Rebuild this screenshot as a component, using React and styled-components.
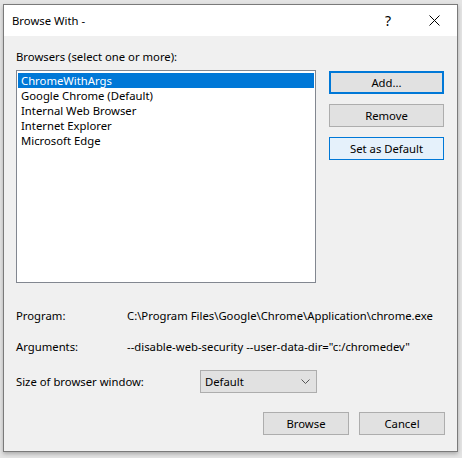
import React from 'react';
import styled, { createGlobalStyle } from 'styled-components';

const GlobalStyle = createGlobalStyle`
  html, body {
    margin: 0;
    padding: 0;
    background: #e4e4e4;
  }
  body {
    font-family: "Noto Sans", "Open Sans", sans-serif;
    font-size: 11.3px;
    color: #000;
  }
`;

const Page = styled.div`
  width: 462px;
  height: 458px;
  padding: 4px 4px 6px 3px;
  box-sizing: border-box;
`;

const Dialog = styled.div`
  width: 455px;
  height: 448px;
  box-sizing: border-box;
  border: 1px solid #7a7a7a;
  background: #f0f0f0;
  display: flex;
  flex-direction: column;
  box-shadow: 0 2px 4px rgba(0, 0, 0, 0.25);
`;

const TitleBar = styled.div`
  height: 31px;
  background: #fff;
  display: flex;
  align-items: center;
  padding-left: 8px;
`;

const Title = styled.div`
  flex: 1;
`;

const TitleButton = styled.div`
  width: 46px;
  height: 31px;
  display: flex;
  align-items: center;
  justify-content: center;
  font-size: 14px;
`;

const Body = styled.div`
  flex: 1;
  padding: 12px 12px 0 12px;
  display: flex;
  flex-direction: column;
`;

const Label = styled.div`
  height: 17px;
  line-height: 17px;
  margin-bottom: 5px;
`;

const MainRow = styled.div`
  display: flex;
  gap: 13px;
`;

const ListBox = styled.div`
  width: 300px;
  height: 213px;
  box-sizing: border-box;
  border: 1px solid #828790;
  background: #fff;
  padding: 2px 1px;
`;

const ListItem = styled.div`
  height: 15px;
  line-height: 15px;
  padding-left: 3px;
  background: ${(p) => (p.$selected ? '#0078d7' : 'transparent')};
  color: ${(p) => (p.$selected ? '#fff' : '#000')};
  white-space: nowrap;
`;

const ButtonColumn = styled.div`
  display: flex;
  flex-direction: column;
  gap: 10px;
  padding-top: 1px;
`;

const Button = styled.div`
  width: ${(p) => p.$width || 115}px;
  height: 23px;
  box-sizing: border-box;
  display: flex;
  align-items: center;
  justify-content: center;
  background: ${(p) => (p.$hover ? '#e5f1fb' : '#e1e1e1')};
  border: ${(p) => (p.$default ? '2px solid #0078d7' : p.$hover ? '1px solid #0078d7' : '1px solid #adadad')};
`;

const InfoRow = styled.div`
  display: flex;
  align-items: center;
  height: 17px;
  margin-top: ${(p) => p.$top}px;
`;

const InfoLabel = styled.div`
  width: ${(p) => p.$width}px;
  flex-shrink: 0;
`;

const InfoValue = styled.div`
  white-space: nowrap;
`;

const SizeRow = styled.div`
  display: flex;
  align-items: center;
  margin-top: 15px;
`;

const Select = styled.div`
  width: 117px;
  height: 23px;
  box-sizing: border-box;
  border: 1px solid #adadad;
  background: #e1e1e1;
  display: flex;
  align-items: center;
  justify-content: space-between;
  padding: 0 6px 0 4px;
`;

const Footer = styled.div`
  display: flex;
  justify-content: flex-end;
  gap: 10px;
  margin-top: 19px;
`;

const browsers = [
  'ChromeWithArgs',
  'Google Chrome (Default)',
  'Internal Web Browser',
  'Internet Explorer',
  'Microsoft Edge',
];

export default function App() {
  return (
    <>
      <GlobalStyle />
      <Page>
        <Dialog>
          <TitleBar>
            <Title>Browse With -</Title>
            <TitleButton>?</TitleButton>
            <TitleButton>
              <svg width="11" height="11" viewBox="0 0 11 11">
                <path d="M0.5 0.5 L10.5 10.5 M10.5 0.5 L0.5 10.5" stroke="#000" strokeWidth="1" />
              </svg>
            </TitleButton>
          </TitleBar>
          <Body>
            <Label>Browsers (select one or more):</Label>
            <MainRow>
              <ListBox>
                {browsers.map((b, i) => (
                  <ListItem key={b} $selected={i === 0}>
                    {b}
                  </ListItem>
                ))}
              </ListBox>
              <ButtonColumn>
                <Button $default>Add...</Button>
                <Button>Remove</Button>
                <Button $hover>Set as Default</Button>
              </ButtonColumn>
            </MainRow>
            <InfoRow $top={24}>
              <InfoLabel $width={111}>Program:</InfoLabel>
              <InfoValue>C:\Program Files\Google\Chrome\Application\chrome.exe</InfoValue>
            </InfoRow>
            <InfoRow $top={14}>
              <InfoLabel $width={111}>Arguments:</InfoLabel>
              <InfoValue>--disable-web-security --user-data-dir="c:/chromedev"</InfoValue>
            </InfoRow>
            <SizeRow>
              <InfoLabel $width={184}>Size of browser window:</InfoLabel>
              <Select>
                <span>Default</span>
                <svg width="9" height="5" viewBox="0 0 9 5">
                  <path d="M0.5 0.5 L4.5 4.5 L8.5 0.5" stroke="#555" fill="none" strokeWidth="1" />
                </svg>
              </Select>
            </SizeRow>
            <Footer>
              <Button $width={86}>Browse</Button>
              <Button $width={86}>Cancel</Button>
            </Footer>
          </Body>
        </Dialog>
      </Page>
    </>
  );
}
